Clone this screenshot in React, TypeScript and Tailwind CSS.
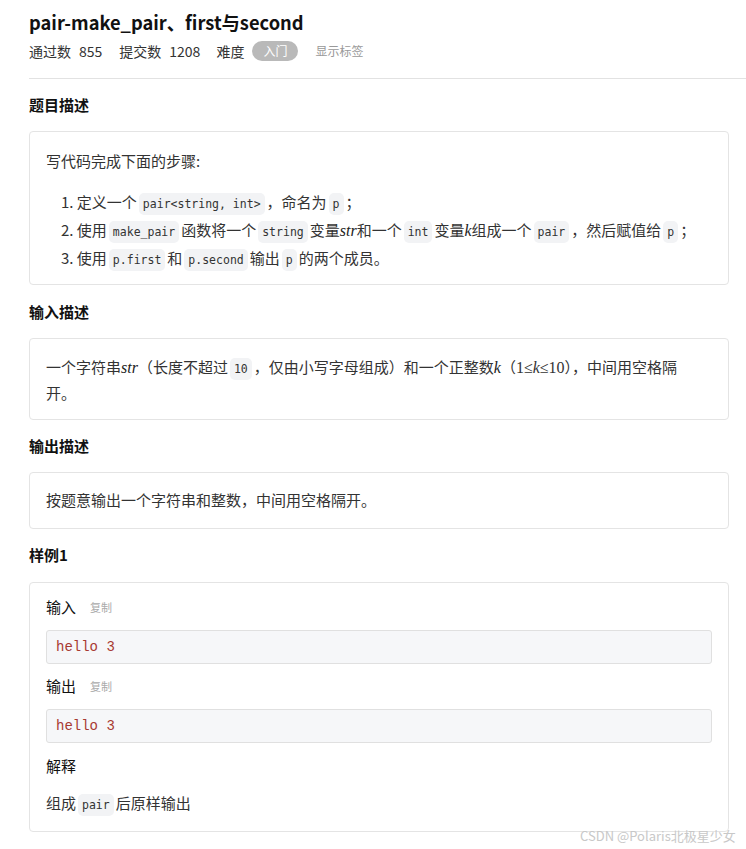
import React from "react";

const sans = { fontFamily: '"Noto Sans CJK SC", "Noto Sans", sans-serif' };
const mono = { fontFamily: '"DejaVu Sans Mono", "Liberation Mono", monospace' };
const serif = { fontFamily: '"Liberation Serif", "DejaVu Serif", serif' };

function C({ children }: { children: React.ReactNode }) {
  return (
    <code
      className="mx-[2px] rounded-[5px] bg-[#f2f3f5] px-[4px] py-[4px] text-[11.5px] leading-[14px] text-[#333]"
      style={mono}
    >
      {children}
    </code>
  );
}

function M({ children }: { children: React.ReactNode }) {
  return (
    <span className="text-[16px] italic leading-[14px] text-[#222]" style={serif}>
      {children}
    </span>
  );
}

function Heading({ children }: { children: React.ReactNode }) {
  return <h3 className="text-[15px] font-bold leading-[20px] text-[#111]">{children}</h3>;
}

function Card({ children, className = "" }: { children: React.ReactNode; className?: string }) {
  return (
    <div className={"rounded-[4px] border border-[#e4e4e4] bg-white pl-[16px] " + className}>
      {children}
    </div>
  );
}

function CodeBlock({ children }: { children: React.ReactNode }) {
  return (
    <div
      className="flex h-[34px] items-center rounded-[3px] border border-[#e0e0e0] bg-[#f6f7f9] px-[9px] text-[14px] text-[#a83a32]"
      style={{ fontFamily: '"Liberation Mono", "Courier New", monospace' }}
    >
      {children}
    </div>
  );
}

export default function App() {
  return (
    <div className="relative min-h-[849px] w-[746px] bg-white text-[#333]" style={sans}>
      <div className="pl-[29px] pt-[8px]">
        <h1 className="text-[18.3px] font-semibold leading-[28px] text-[#111]">
          pair-make_pair、first与second
        </h1>
        <div className="mt-[5px] flex items-center text-[14px] leading-[20px] text-[#333]">
          <span>通过数</span>
          <span className="ml-[8px]">855</span>
          <span className="ml-[17px]">提交数</span>
          <span className="ml-[8px]">1208</span>
          <span className="ml-[16px]">难度</span>
          <span className="ml-[8px] flex h-[20px] items-center rounded-full bg-[#b9b9b9] px-[11px] text-[12px] text-white">
            入门
          </span>
          <span className="ml-[17px] text-[12px] text-[#999]">显示标签</span>
        </div>
      </div>
      <div className="ml-[29px] mt-[17px] h-px bg-[#e2e2e2]" />

      <div className="ml-[29px] mr-[17px]">
        <div className="mt-[16px]">
          <Heading>题目描述</Heading>
        </div>
        <Card className="mt-[16px] pb-[12px] pt-[18px] pr-[16px]">
          <p className="text-[15px] leading-[22px]">写代码完成下面的步骤:</p>
          <ol className="mt-[16px] pl-[15px] text-[15px] leading-[28px]">
            <li>
              1. 定义一个<C>{"pair<string, int>"}</C>，命名为<C>p</C>；
            </li>
            <li>
              2. 使用<C>make_pair</C>函数将一个<C>string</C>变量<M>str</M>和一个<C>int</C>变量<M>k</M>组成一个<C>pair</C>，然后赋值给<C>p</C>；
            </li>
            <li>
              3. 使用<C>p.first</C>和<C>p.second</C>输出<C>p</C>的两个成员。
            </li>
          </ol>
        </Card>

        <div className="mt-[17px]">
          <Heading>输入描述</Heading>
        </div>
        <Card className="mt-[16px] pb-[13px] pt-[15px] pr-[30px]">
          <p className="text-[15px] leading-[26px]">
            一个字符串<M>str</M>（长度不超过<C>10</C>，仅由小写字母组成）和一个正整数<M>k</M>（
            <span className="text-[16px] leading-[14px]" style={serif}>
              1≤<i>k</i>≤10
            </span>
            ），中间用空格隔开。
          </p>
        </Card>

        <div className="mt-[16px]">
          <Heading>输出描述</Heading>
        </div>
        <Card className="mt-[16px] pb-[17px] pt-[16px] pr-[16px]">
          <p className="text-[15px] leading-[22px]">按题意输出一个字符串和整数，中间用空格隔开。</p>
        </Card>

        <div className="mt-[16px]">
          <Heading>样例1</Heading>
        </div>
        <Card className="mt-[17px] pb-[17px] pt-[14px] pr-[16px]">
          <div className="flex items-center text-[15px] leading-[20px] text-[#111]">
            <span>输入</span>
            <span className="ml-[14px] text-[11px] text-[#aaa]">复制</span>
          </div>
          <div className="mt-[13px]">
            <CodeBlock>hello 3</CodeBlock>
          </div>
          <div className="mt-[12px] flex items-center text-[15px] leading-[20px] text-[#111]">
            <span>输出</span>
            <span className="ml-[14px] text-[11px] text-[#aaa]">复制</span>
          </div>
          <div className="mt-[13px]">
            <CodeBlock>hello 3</CodeBlock>
          </div>
          <div className="mt-[13px] text-[15px] leading-[20px] text-[#111]">解释</div>
          <p className="mt-[16px] text-[15px] leading-[22px]">
            组成<C>pair</C>后原样输出
          </p>
        </Card>
      </div>

      <div className="absolute left-[580px] top-[827px] text-[13px] leading-[18px] text-[#c8c8c8]">
        CSDN @Polaris北极星少女
      </div>
    </div>
  );
}
